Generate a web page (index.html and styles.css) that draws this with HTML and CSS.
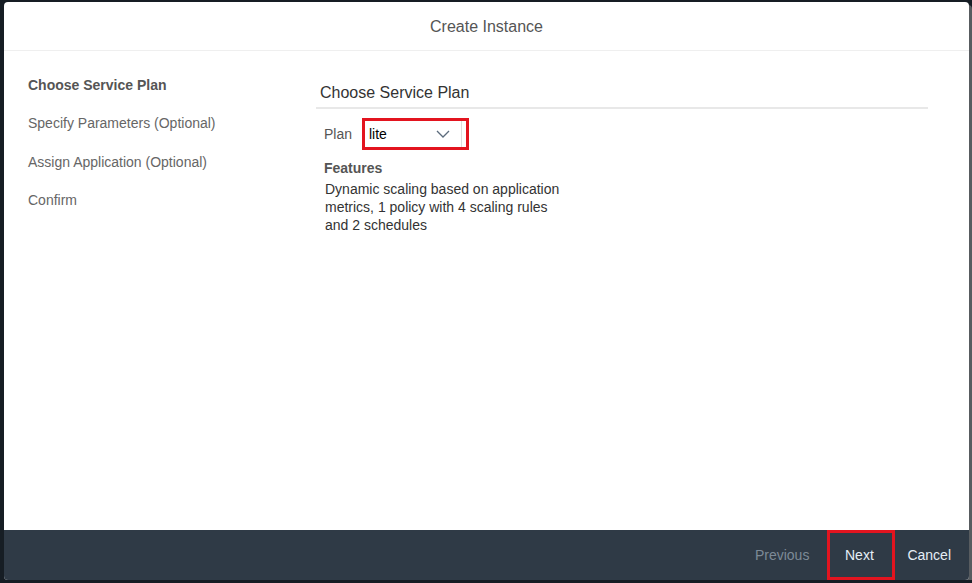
FILE: index.html
```html
<!DOCTYPE html>
<html lang="en">
<head>
    <meta charset="UTF-8">
    <title>Create Instance</title>
    <link rel="stylesheet" href="styles.css">
</head>
<body>
    <div class="dialog">
        <div class="dialog-header">Create Instance</div>
        <div class="dialog-body">
            <ul class="steps">
                <li class="step active">Choose Service Plan</li>
                <li class="step">Specify Parameters (Optional)</li>
                <li class="step">Assign Application (Optional)</li>
                <li class="step">Confirm</li>
            </ul>
            <div class="panel">
                <h3 class="panel-title">Choose Service Plan</h3>
                <div class="plan-row">
                    <span class="plan-label">Plan</span>
                    <div class="mark">
                        <div class="select">
                            <span>lite</span>
                            <svg width="14" height="8" viewBox="0 0 14 8"><path d="M1 1 L7 7 L13 1" fill="none" stroke="#5b6b7c" stroke-width="1.3"/></svg>
                        </div>
                    </div>
                </div>
                <div class="features-title">Features</div>
                <p class="features-text">Dynamic scaling based on application metrics, 1 policy with 4 scaling rules and 2 schedules</p>
            </div>
        </div>
        <div class="dialog-footer">
            <button class="btn disabled">Previous</button>
            <button class="btn next">Next</button>
            <button class="btn">Cancel</button>
        </div>
    </div>
</body>
</html>
```

FILE: styles.css
```css
body {
    margin: 0;
    background-color: #161d24;
    font-family: Arial, 'Liberation Sans', sans-serif;
    font-size: 14px;
    color: #333333;
}

.dialog {
    margin: 2px 0 0 4px;
    width: 965px;
    height: 578px;
    background-color: #ffffff;
    border-radius: 4px;
    display: flex;
    flex-direction: column;
    overflow: hidden;
    box-shadow: 3px 3px 0 #585c60;
}

.dialog-header {
    height: 47px;
    padding-top: 1px;
    line-height: 48px;
    text-align: center;
    font-size: 16px;
    color: #555555;
    border-bottom: 1px solid #efefef;
}

.dialog-body {
    flex: 1;
    display: flex;
}

.steps {
    list-style: none;
    margin: 0;
    padding: 15px 0 0 24px;
    width: 288px;
}

.step {
    height: 38.4px;
    line-height: 38px;
    color: #666666;
}

.step.active {
    font-weight: bold;
    color: #555555;
}

.panel {
    width: 612px;
    padding-top: 32px;
}

.panel-title {
    margin: 0;
    padding: 0 0 4px 4px;
    font-size: 16px;
    font-weight: normal;
    line-height: 20px;
    color: #333333;
    border-bottom: 2px solid #e8e8e8;
}

.plan-row {
    display: flex;
    align-items: center;
    margin-top: 9px;
    padding-left: 8px;
}

.plan-label {
    color: #555555;
    width: 38px;
}

.mark {
    border: 3px solid #e3141f;
    padding-right: 4px;
}

.select {
    width: 81px;
    height: 26px;
    padding: 0 11px 0 4px;
    border-right: 1px solid #dddddd;
    display: flex;
    align-items: center;
    justify-content: space-between;
    color: #000000;
}

.features-title {
    margin: 10px 0 0 8px;
    font-weight: bold;
    color: #555555;
}

.features-text {
    margin: 4px 0 0 9px;
    width: 238px;
    line-height: 18px;
    color: #333333;
}

.dialog-footer {
    height: 50px;
    background-color: #2f3a46;
    display: flex;
    justify-content: flex-end;
    align-items: stretch;
    padding-right: 6px;
}

.btn {
    background: none;
    border: none;
    font-family: inherit;
    font-size: 14px;
    color: #e6eef6;
    padding: 0 12px;
    cursor: pointer;
}

.btn.disabled {
    color: #7d8a97;
    margin-right: 6px;
}

.btn.next {
    border: 3px solid #e3141f;
    width: 68px;
    padding-right: 16px;
}
```
